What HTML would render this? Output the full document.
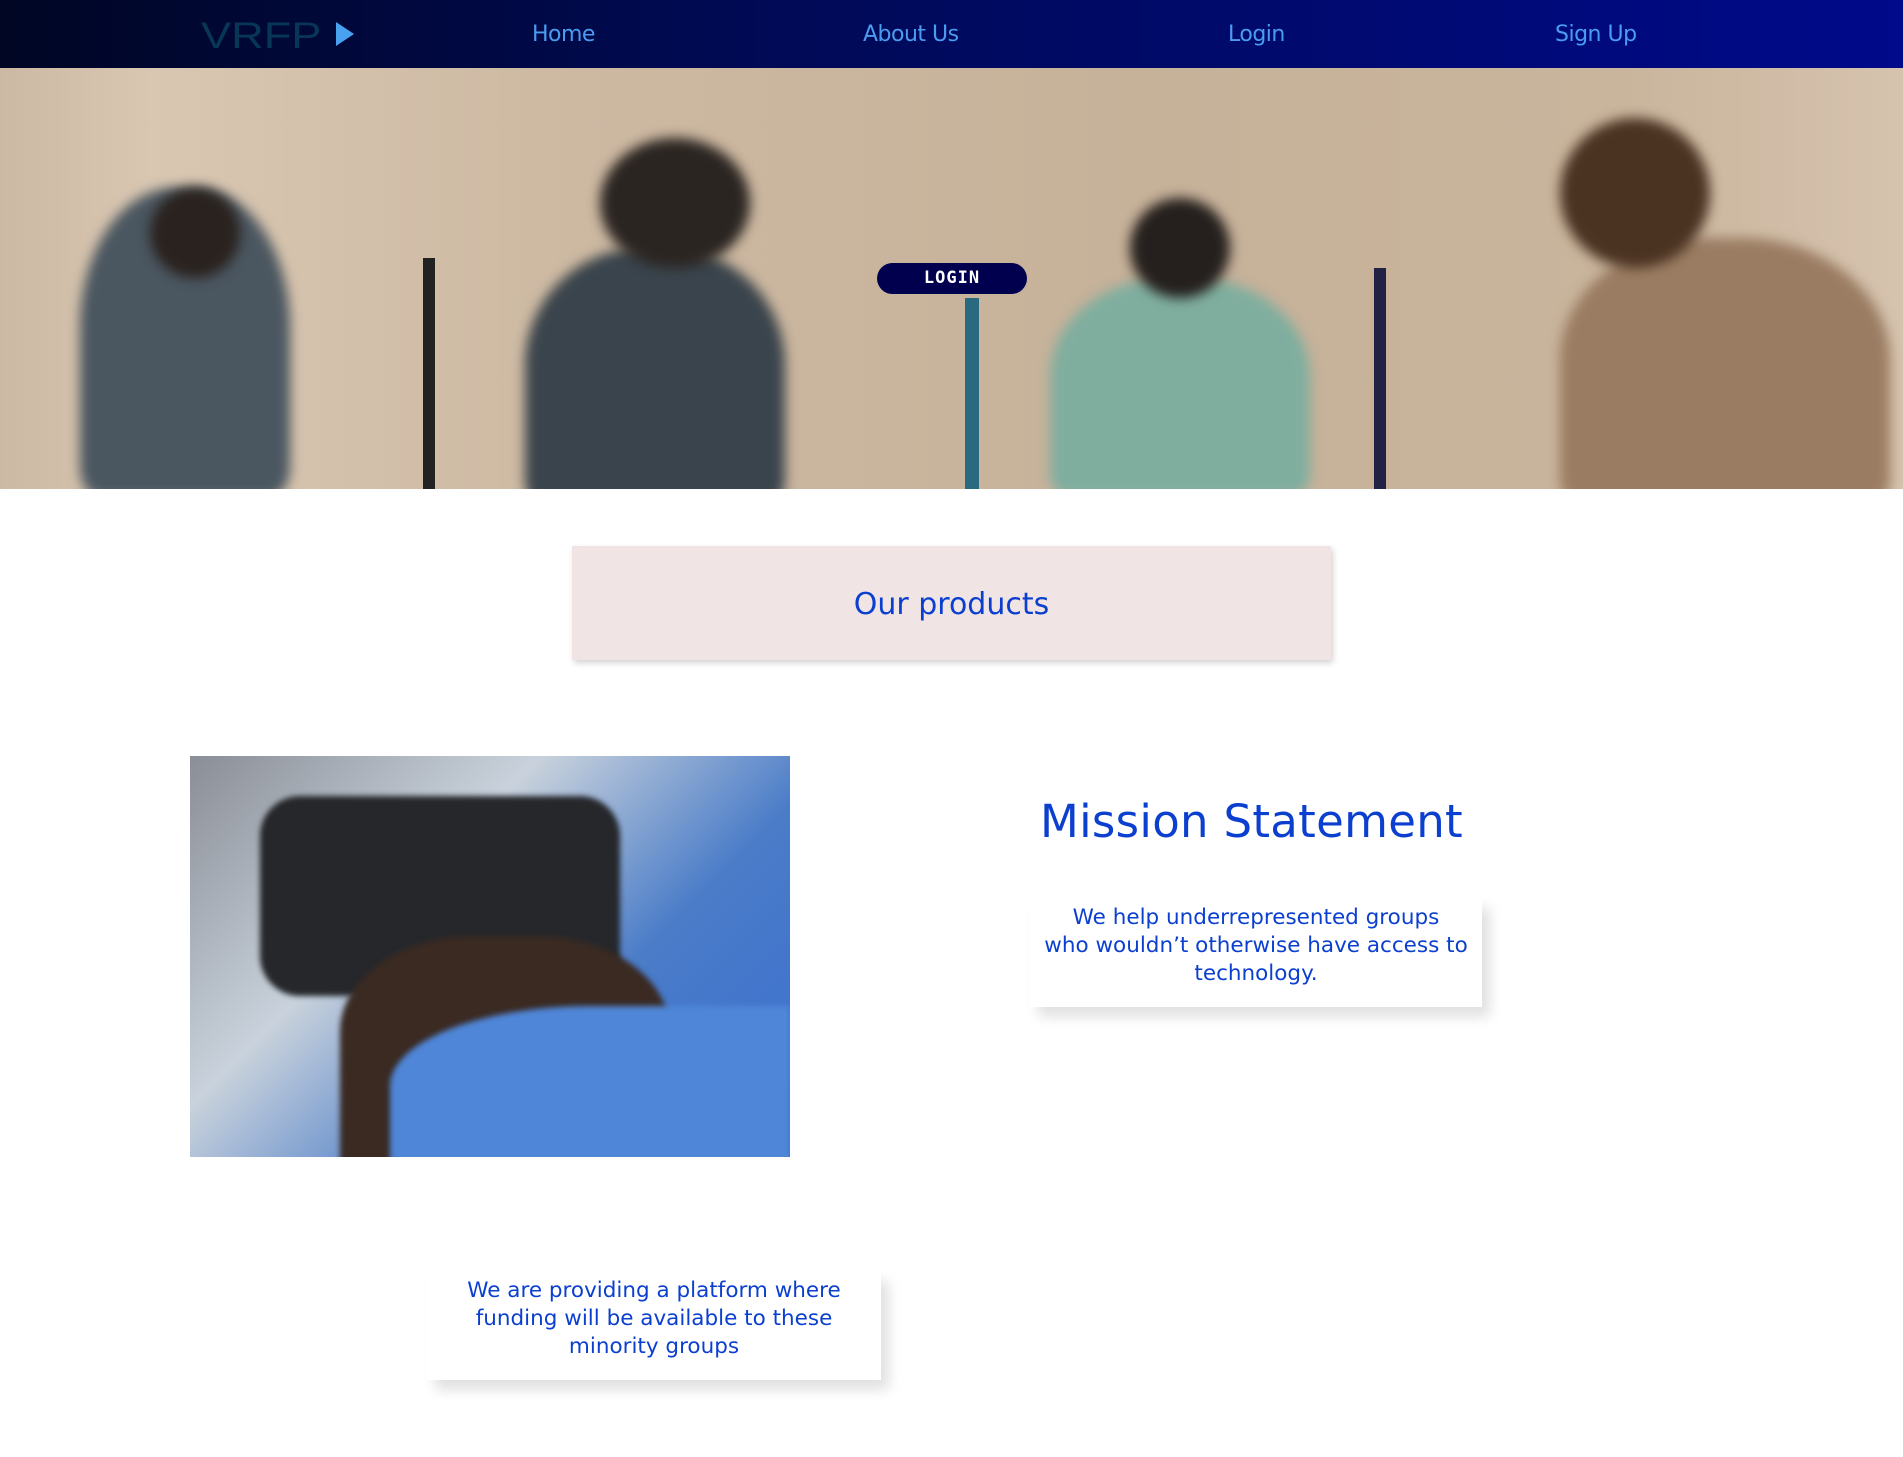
<!DOCTYPE html>
<html><head><meta charset="utf-8"><style>
*{margin:0;padding:0;box-sizing:border-box}
body{width:1903px;height:1457px;background:#fff;font-family:"DejaVu Sans","Liberation Sans",sans-serif;position:relative;overflow:hidden;color:#0b3fcf}
.nav{position:absolute;left:0;top:0;width:1903px;height:68px;background:linear-gradient(90deg,#000624 0%,#000a55 40%,#000a8a 100%)}
.nav a{position:absolute;top:22px;font-size:22px;color:#4a9cf0;text-decoration:none;letter-spacing:-0.5px}
.logo{position:absolute;left:201px;top:15px;font-family:"Liberation Sans",sans-serif;font-size:37px;color:#073656;letter-spacing:0px;font-weight:300;transform:scaleX(1.22);transform-origin:left}
.tri{position:absolute;left:336px;top:22px;width:0;height:0;border-top:12px solid transparent;border-bottom:12px solid transparent;border-left:18px solid #48a2f0}
.hero{position:absolute;left:0;top:68px;width:1903px;height:421px;background:linear-gradient(90deg,#cbb9a3 0%,#d9c7b2 8%,#cdb9a2 30%,#c6b199 60%,#c9b49c 85%,#d6c3ae 100%);overflow:hidden}
.blob{position:absolute;border-radius:45% 45% 10% 10%;filter:blur(6px)}
.btn{position:absolute;left:877px;top:263px;width:150px;height:31px;border-radius:16px;background:#00004f;color:#fff;font-family:"DejaVu Sans Mono","Liberation Mono",monospace;font-weight:bold;font-size:17px;text-align:center;line-height:31px;letter-spacing:1px}
.prod{position:absolute;left:572px;top:546px;width:759px;height:114px;background:#f0e4e4;box-shadow:2px 3px 6px rgba(0,0,0,.18);text-align:center;line-height:118px;font-size:30px}
.img{position:absolute;left:190px;top:756px;width:600px;height:401px;background:linear-gradient(135deg,#8a8e96 0%,#c9d2dc 35%,#4a7cc8 65%,#3a6fd0 100%);overflow:hidden}
h1{position:absolute;left:1000px;width:503px;top:795px;text-align:center;font-size:45px;font-weight:normal;letter-spacing:0.3px}
.card{position:absolute;background:#fff;box-shadow:8px 10px 12px rgba(0,0,0,.12);text-align:center;font-size:21.5px;line-height:28px}
</style></head><body>
<div class="nav">
<div class="logo">VRFP</div><div class="tri"></div>
<a style="left:532px">Home</a>
<a style="left:863px">About Us</a>
<a style="left:1228px">Login</a>
<a style="left:1555px">Sign Up</a>
</div>
<div class="hero">
<div class="blob" style="left:80px;top:120px;width:210px;height:310px;background:#4a5660"></div>
<div class="blob" style="left:150px;top:120px;width:90px;height:90px;background:#2a221e;border-radius:50%"></div>
<div class="blob" style="left:525px;top:180px;width:260px;height:260px;background:#3a444c"></div>
<div class="blob" style="left:600px;top:70px;width:150px;height:130px;background:#2b2522;border-radius:50%"></div>
<div class="blob" style="left:1050px;top:210px;width:260px;height:220px;background:#7fae9f"></div>
<div class="blob" style="left:1130px;top:130px;width:100px;height:100px;background:#25201e;border-radius:50%"></div>
<div class="blob" style="left:1560px;top:170px;width:330px;height:270px;background:#9a7c62"></div>
<div class="blob" style="left:1560px;top:50px;width:150px;height:150px;background:#4b3322;border-radius:50%"></div>
<div style="position:absolute;left:423px;top:190px;width:12px;height:240px;background:#222"></div>
<div style="position:absolute;left:965px;top:230px;width:14px;height:200px;background:#2a6a80"></div>
<div style="position:absolute;left:1374px;top:200px;width:12px;height:230px;background:#224"></div>
</div>
<div class="btn">LOGIN</div>
<div class="prod">Our products</div>
<div class="img">
<div style="position:absolute;left:70px;top:40px;width:360px;height:200px;background:#25272b;border-radius:40px;filter:blur(3px)"></div>
<div style="position:absolute;left:150px;top:180px;width:330px;height:240px;background:#3a2a22;border-radius:40% 40% 0 0;filter:blur(3px)"></div>
<div style="position:absolute;left:200px;top:250px;width:400px;height:160px;background:#4f86d8;border-radius:50% 0 0 0;filter:blur(3px)"></div>
</div>
<h1>Mission Statement</h1>
<div class="card" style="left:1030px;top:898px;width:452px;height:109px;padding-top:6px">We help underrepresented groups<br>who wouldn’t otherwise have access to<br>technology.</div>
<div class="card" style="left:427px;top:1271px;width:454px;height:109px;padding-top:6px">We are providing a platform where<br>funding will be available to these<br>minority groups</div>
</body></html>
